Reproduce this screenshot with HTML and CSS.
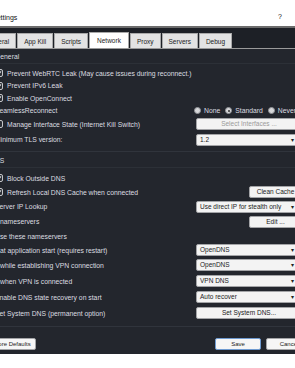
FILE: index.html
```html
<!DOCTYPE html>
<html lang="en">
<head>
  <meta charset="UTF-8" />
  <meta name="viewport" content="width=device-width, initial-scale=1.0" />
  <title>Settings</title>
  <link rel="stylesheet" href="styles.css">
</head>
<body>
  <div class="window">
    <div class="titlebar">
      <span class="title">Settings</span>
      <span class="help">?</span>
    </div>

    <div class="tabbar">
      <div class="tab">General</div>
      <div class="tab">App Kill</div>
      <div class="tab">Scripts</div>
      <div class="tab active">Network</div>
      <div class="tab">Proxy</div>
      <div class="tab">Servers</div>
      <div class="tab">Debug</div>
    </div>

    <div class="panel">
      <section class="group general">
        <div class="group-title">General</div>

        <div class="row">
          <label class="check">
            <svg class="box" viewBox="0 0 8 8"><rect x=".5" y=".5" width="7" height="7" rx="1.5"/><path d="M2 4.1l1.4 1.5L6 2.4"/></svg>
            Prevent WebRTC Leak (May cause issues during reconnect.)
          </label>
        </div>
        <div class="row">
          <label class="check">
            <svg class="box" viewBox="0 0 8 8"><rect x=".5" y=".5" width="7" height="7" rx="1.5"/><path d="M2 4.1l1.4 1.5L6 2.4"/></svg>
            Prevent IPv6 Leak
          </label>
        </div>
        <div class="row">
          <label class="check">
            <svg class="box" viewBox="0 0 8 8"><rect x=".5" y=".5" width="7" height="7" rx="1.5"/><path d="M2 4.1l1.4 1.5L6 2.4"/></svg>
            Enable OpenConnect
          </label>
        </div>
        <div class="row">
          <span class="label">SeamlessReconnect</span>
          <div class="radios">
            <span class="radio"></span><span>None</span>
            <span class="radio on"></span><span>Standard</span>
            <span class="radio"></span><span>Never</span>
          </div>
        </div>
        <div class="row mid">
          <label class="check">
            <svg class="box" viewBox="0 0 8 8"><rect x=".5" y=".5" width="7" height="7" rx="1.5"/></svg>
            Manage Interface State (Internet Kill Switch)
          </label>
          <button class="ctrl btn dim">Select Interfaces ...</button>
        </div>
        <div class="row tls">
          <span class="label">Minimum TLS version:</span>
          <div class="ctrl select">1.2</div>
        </div>
      </section>

      <section class="group dns">
        <div class="group-title">DNS</div>

        <div class="row">
          <label class="check">
            <svg class="box" viewBox="0 0 8 8"><rect x=".5" y=".5" width="7" height="7" rx="1.5"/><path d="M2 4.1l1.4 1.5L6 2.4"/></svg>
            Block Outside DNS
          </label>
        </div>
        <div class="row">
          <label class="check">
            <svg class="box" viewBox="0 0 8 8"><rect x=".5" y=".5" width="7" height="7" rx="1.5"/><path d="M2 4.1l1.4 1.5L6 2.4"/></svg>
            Refresh Local DNS Cache when connected
          </label>
          <button class="ctrl btn small">Clean Cache</button>
        </div>
        <div class="row mid">
          <span class="label">Server IP Lookup</span>
          <div class="ctrl select">Use direct IP for stealth only</div>
        </div>
        <div class="row mid">
          <span class="label sub">nameservers</span>
          <button class="ctrl btn small">Edit ...</button>
        </div>
        <div class="row">
          <span class="label">Use these nameservers</span>
        </div>
        <div class="row">
          <span class="label sub">at application start (requires restart)</span>
          <div class="ctrl select">OpenDNS</div>
        </div>
        <div class="row tall">
          <span class="label sub">while establishing VPN connection</span>
          <div class="ctrl select">OpenDNS</div>
        </div>
        <div class="row tall">
          <span class="label sub">when VPN is connected</span>
          <div class="ctrl select">VPN DNS</div>
        </div>
        <div class="row tall">
          <span class="label">Enable DNS state recovery on start</span>
          <div class="ctrl select">Auto recover</div>
        </div>
        <div class="row tall">
          <span class="label">Set System DNS (permanent option)</span>
          <button class="ctrl btn">Set System DNS...</button>
        </div>
      </section>

      <div class="footer">
        <button class="fbtn">Restore Defaults</button>
        <div class="actions">
          <button class="fbtn default">Save</button>
          <button class="fbtn">Cancel</button>
        </div>
      </div>
    </div>
  </div>
</body>
</html>
```

FILE: styles.css
```css
body {
  margin: 0;
  background: #ffffff;
  font-family: 'Liberation Sans', Arial, sans-serif;
  font-size: 6.8px;
  overflow: hidden;
}
.window {
  width: 330px;
  margin-left: -25px;
}
.titlebar {
  height: 26px;
  display: flex;
  justify-content: space-between;
  align-items: flex-end;
  padding: 0 23px 3px 17px;
  box-sizing: border-box;
  color: #111;
  font-size: 7px;
  line-height: 10px;
}
.help {
  margin-bottom: 1px;
}
.tabbar {
  display: flex;
  align-items: flex-end;
  gap: 1px;
  height: 20px;
  padding-left: 4px;
  border-top: 2px solid #6c6c6c;
  border-bottom: 1px solid #9a9a9a;
  background: #1d2026;
}
.tab {
  height: 15px;
  line-height: 15px;
  padding: 0 6px;
  background: #e3e3e3;
  border: 1px solid #a9a9a9;
  border-bottom: none;
  box-sizing: border-box;
  color: #222;
  font-size: 6.5px;
}
.tab.active {
  height: 16px;
  background: #ffffff;
  padding: 0 7px;
}
.panel {
  background: #23262d;
  color: #dcdde0;
  padding: 2px 5px 4px 20px;
}
.group {
  border-bottom: 1px solid #30343c;
}
.general {
  padding-bottom: 5px;
}
.dns {
  padding-top: 3px;
  padding-bottom: 5px;
}
.group-title {
  height: 12px;
  line-height: 12px;
  margin-bottom: 3px;
  border-bottom: 1px solid #2c3037;
}
.dns .group-title {
  margin-left: -5px;
}
.row {
  display: flex;
  align-items: center;
  justify-content: space-between;
  height: 12.5px;
}
.dns .row {
  height: 14px;
}
.row.mid {
  height: 14px;
}
.dns .row.mid {
  height: 15px;
}
.dns .row.tall {
  height: 16px;
}
.row.tls {
  height: 13px;
  margin-top: 2px;
}
.label.sub {
  padding-left: 5px;
}
.check {
  display: flex;
  align-items: center;
  gap: 4px;
}
.box {
  width: 8px;
  height: 8px;
  flex: none;
}
.box rect {
  fill: #2a2d34;
  stroke: #c4c5c8;
}
.box path {
  fill: none;
  stroke: #d4d5d7;
  stroke-width: 1.1;
}
.radios {
  display: flex;
  align-items: center;
  gap: 3px;
  width: 106px;
}
.radio {
  width: 7px;
  height: 7px;
  border-radius: 50%;
  border: 1px solid #8f9196;
  background: #d6d7d9;
  box-sizing: border-box;
  margin-left: 2px;
  position: relative;
}
.radio:first-child {
  margin-left: 0;
}
.radio.on::after {
  content: "";
  position: absolute;
  left: 1.5px;
  top: 1.5px;
  width: 2px;
  height: 2px;
  border-radius: 50%;
  background: #333;
}
.ctrl {
  width: 106px;
  margin-right: -2px;
  height: 12px;
  box-sizing: border-box;
  border: 1px solid #a3a4a7;
  border-radius: 2px;
  background: #f3f3f3;
  color: #222;
  font-family: inherit;
  font-size: 6.5px;
  line-height: 10px;
  padding: 0 3px;
}
.btn {
  text-align: center;
}
.btn.small {
  width: 53px;
}
.btn.dim {
  color: #9a9a9a;
}
.select {
  position: relative;
}
.select::after {
  content: "\25BE";
  position: absolute;
  right: 7px;
  top: 0;
  font-size: 6px;
}
.footer {
  display: flex;
  justify-content: space-between;
  align-items: center;
  margin: 0 -12px 0 -14px;
  padding-top: 11px;
}
.actions {
  display: flex;
  gap: 5px;
}
.fbtn {
  height: 12px;
  padding: 0 4px;
  border: 1px solid #a3a4a7;
  border-radius: 2px;
  background: #f6f6f6;
  color: #222;
  font-family: inherit;
  font-size: 6px;
  line-height: 10px;
  min-width: 46px;
}
.fbtn.default {
  border-color: #6f9bd1;
}
```
